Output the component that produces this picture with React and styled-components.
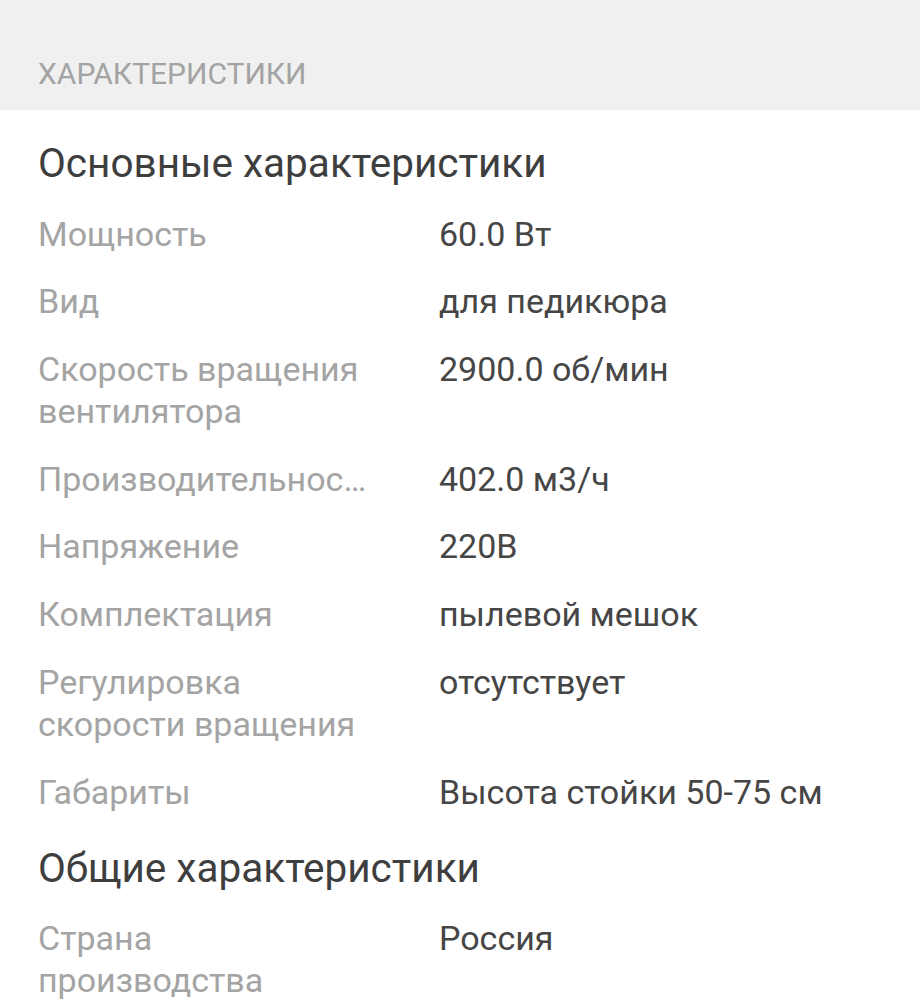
import React from "react";
import styled, { createGlobalStyle } from "styled-components";

const Global = createGlobalStyle`
  html, body { margin: 0; padding: 0; background: #ffffff; }
  body { font-family: Roboto, "Noto Sans", sans-serif; -webkit-font-smoothing: antialiased; }
`;

const Page = styled.div`
  width: 920px;
  display: flex;
  flex-direction: column;
`;

const Band = styled.div`
  height: 110px;
  box-sizing: border-box;
  background: #f0f0f0;
  padding: 58px 38px 0;
  font-size: 30px;
  line-height: 32px;
  color: #a3a3a3;
  text-transform: uppercase;
`;

const Body = styled.div`
  padding: 29px 38px 0;
  display: flex;
  flex-direction: column;
  gap: 31px;
`;

const Section = styled.section`
  display: flex;
  flex-direction: column;
  gap: 25.7px;
`;

const SectionTitle = styled.h2`
  margin: 0;
  font-size: 40.5px;
  line-height: 48px;
  font-weight: 400;
  color: #3e3e3e;
`;

const Row = styled.div`
  display: grid;
  grid-template-columns: 336px 1fr;
  column-gap: 65px;
  font-size: 34px;
  line-height: 42px;
`;

const Label = styled.div`
  color: #a4a4a4;
  min-width: 0;
  ${(p) =>
    p.$truncate &&
    `
    white-space: nowrap;
    overflow: hidden;
    text-overflow: ellipsis;
  `}
`;

const Value = styled.div`
  color: #464646;
`;

const sections = [
  {
    title: "Основные характеристики",
    rows: [
      ["Мощность", "60.0 Вт"],
      ["Вид", "для педикюра"],
      ["Скорость вращения вентилятора", "2900.0 об/мин"],
      ["Производительность", "402.0 м3/ч", true],
      ["Напряжение", "220В"],
      ["Комплектация", "пылевой мешок"],
      ["Регулировка скорости вращения", "отсутствует"],
      ["Габариты", "Высота стойки 50-75 см"],
    ],
  },
  {
    title: "Общие характеристики",
    rows: [["Страна производства", "Россия"]],
  },
];

export default function App() {
  return (
    <Page>
      <Global />
      <Band>Характеристики</Band>
      <Body>
        {sections.map((s) => (
          <Section key={s.title}>
            <SectionTitle>{s.title}</SectionTitle>
            {s.rows.map(([label, value, truncate]) => (
              <Row key={label}>
                <Label $truncate={truncate} title={truncate ? label : undefined}>
                  {label}
                </Label>
                <Value>{value}</Value>
              </Row>
            ))}
          </Section>
        ))}
      </Body>
    </Page>
  );
}
